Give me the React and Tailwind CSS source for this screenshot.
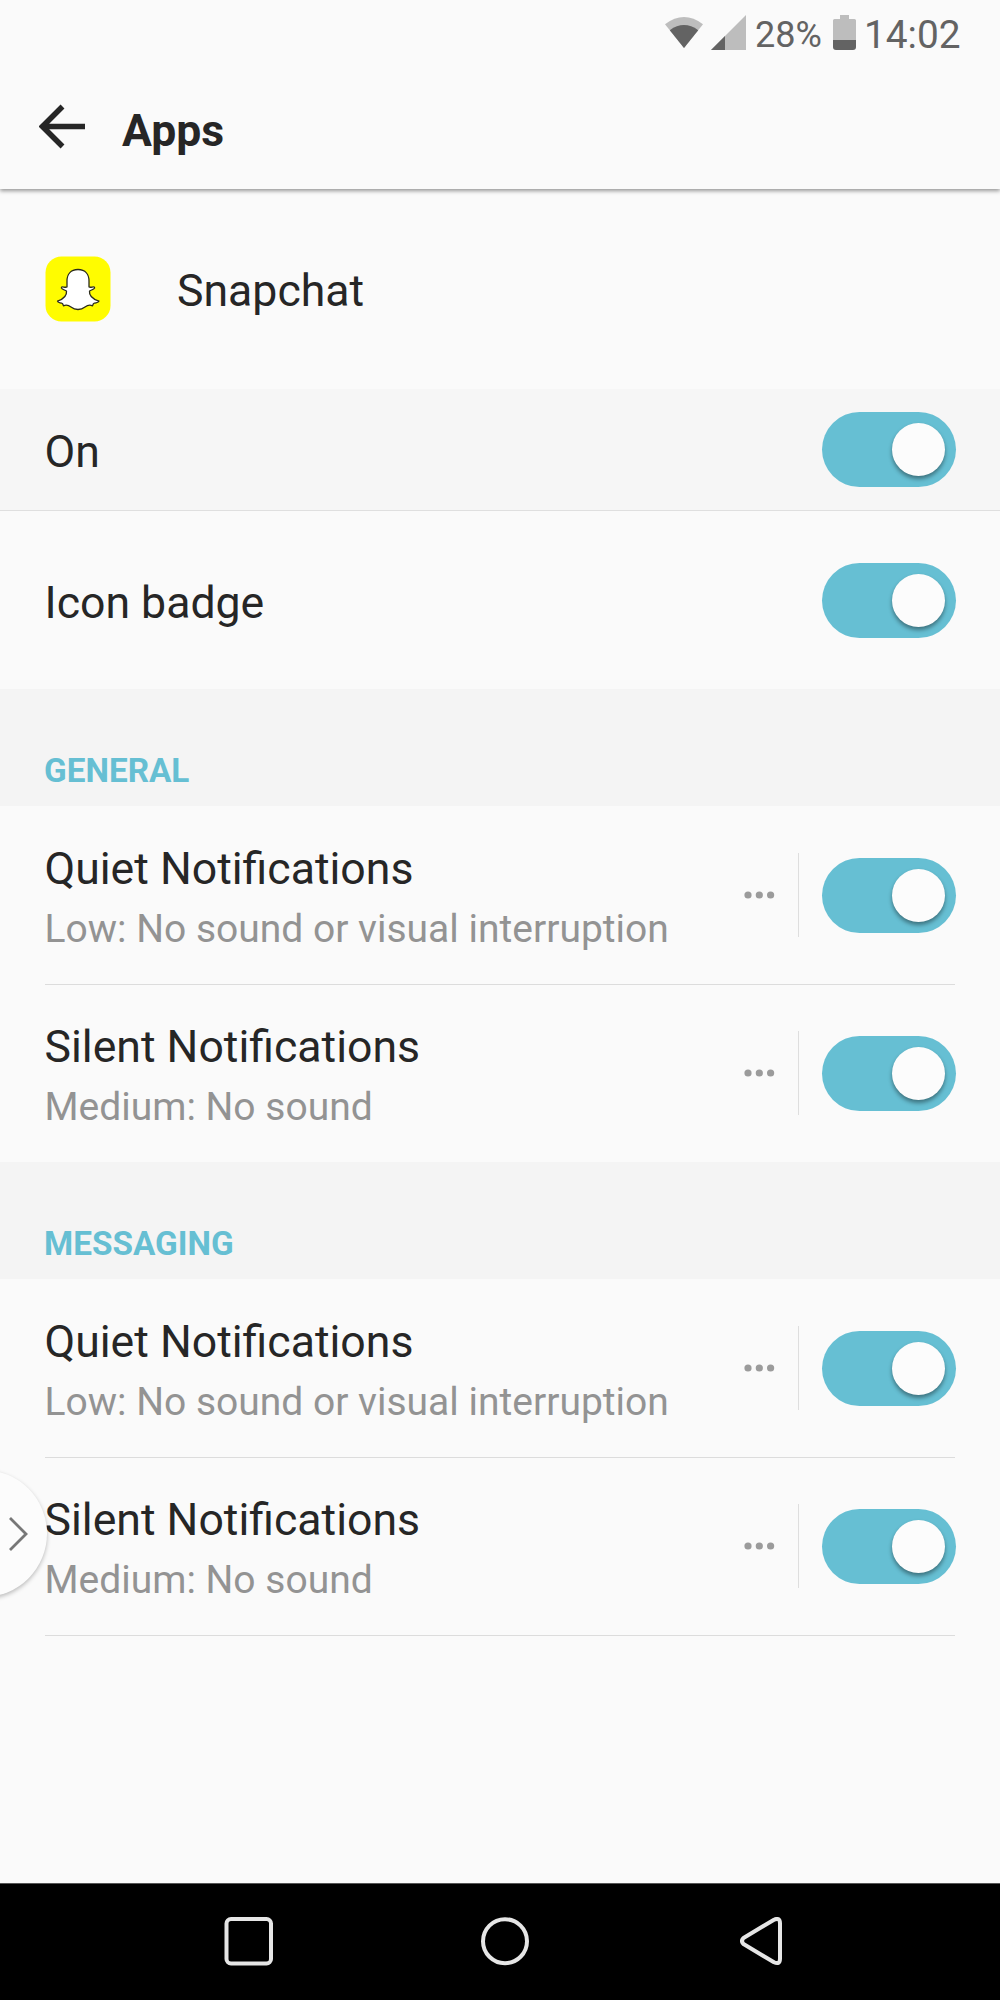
import React from "react";

function StatusBar() {
  return (
    <div className="relative z-10 flex h-[68px] shrink-0 items-start bg-[#fafafa] pl-[664px] text-[#636363]">
      <svg className="mt-[16px] h-[34px] w-[40px] shrink-0" viewBox="0 0 40 34">
        <path d="M1 8.2Q20-6.200 39 8.200L20 32Z" fill="#bdbdbd" />
        <path d="M5.800 14.200Q20 4 34.200 14.200L20 32Z" fill="#636363" />
      </svg>
      <svg className="ml-[7px] mt-[15px] h-[35px] w-[35px] shrink-0" viewBox="0 0 35 35">
        <path d="M35 0V35H0Z" fill="#bdbdbd" />
        <path d="M14 21V35H0Z" fill="#636363" />
      </svg>
      <span className="ml-[9px] mt-[15px] w-[68px] whitespace-nowrap text-[36px] leading-[40px]">28%</span>
      <svg className="ml-[10px] mt-[15px] h-[35px] w-[23px] shrink-0" viewBox="0 0 23 35">
        <path d="M0 5.500Q0 4 1.500 4H7V0H16V4H21.500Q23 4 23 5.500V25H0Z" fill="#bdbdbd" />
        <path d="M0 25H23V32Q23 35 20 35H3Q0 35 0 32Z" fill="#636363" />
      </svg>
      <span className="ml-[8px] mt-[15px] whitespace-nowrap text-[38.8px] leading-[40px]">14:02</span>
    </div>
  );
}

function Header() {
  return (
    <header className="relative flex h-[121px] shrink-0 items-center bg-[#fafafa] pl-[39px] shadow-[0_2px_4px_rgba(0,0,0,0.4)]">
      <svg className="h-[46px] w-[46px] shrink-0 -translate-y-[2px]" viewBox="0 0 46 46" fill="none" stroke="#262626" strokeWidth="5.5">
        <path d="M23.500 2.500L3.500 22.500L23.500 42.500M3.500 22.500H46" />
      </svg>
      <h1 className="ml-[37px] pt-[4px] text-[44.5px] font-bold leading-[60px]">Apps</h1>
    </header>
  );
}

function Toggle() {
  return (
    <button aria-label="Toggle" className="-mr-px flex h-[75px] w-[134px] shrink-0 items-center justify-end rounded-full bg-[#66bfd3] pr-[11px]">
      <span className="size-[53px] rounded-full bg-[#fcfcfc] shadow-[0_3px_4px_rgba(0,0,0,0.4)]" />
    </button>
  );
}

function SnapchatIcon() {
  return (
    <svg className="h-[66px] w-[66px] shrink-0" viewBox="0 0 66 66">
      <rect x="0.500" y="0.500" width="65" height="65" rx="16" fill="#fffc00" />
      <path
        d="M33 13.500C25.500 13.500 22 18.500 22 25V31C20 32 17.500 30 16.500 31.200C15.700 32.500 18 33.500 21.500 35C22 39 18.500 43 12.500 45.200C12.800 47 15 46.500 17.500 47.500L18.500 49.800C21.500 48.500 24 49.500 26 51C28.500 53 30.500 53.500 33 53.500C35.500 53.500 37.500 53 40 51C42 49.500 44.500 48.500 47.500 49.800L48.500 47.500C51 46.500 53.500 47 54 45.200C47.500 43 44 39 44.500 35C48 33.500 50.300 32.500 49.500 31.200C48.500 30 46 32 44 31V25C44 18.500 40.500 13.500 33 13.500Z"
        fill="white" stroke="#2b2b1c" strokeWidth="1.300" strokeLinejoin="round"
      />
    </svg>
  );
}

function SectionHeader({ children }) {
  return (
    <h2 className="h-[117px] shrink-0 bg-[#f4f4f4] pl-[44px] pt-[62px] text-[33.3px] font-bold leading-[40px] text-[#66bfd3]">
      {children}
    </h2>
  );
}

function NotificationRow({ title, detail, divider = true }) {
  return (
    <div className="mx-[45px] h-[178px] shrink-0">
      <div className="flex h-[178px] items-center">
        <div className="-ml-[0.5px] flex-1 whitespace-nowrap pt-[7px]">
          <div className="text-[44.6px] leading-[60px]">{title}</div>
          <div className="text-[39px] leading-[60px] text-[#939393]">{detail}</div>
        </div>
        <svg className="h-[8px] w-[31px] shrink-0" viewBox="0 0 31 8" fill="#9b9b9b">
          <circle cx="4" cy="4" r="3.600" />
          <circle cx="15.300" cy="4" r="3.600" />
          <circle cx="26.600" cy="4" r="3.600" />
        </svg>
        <div className="ml-[23px] mr-[23px] h-[84px] w-px bg-[#dedede]" />
        <Toggle />
      </div>
      {divider && <div className="h-px bg-[#dcdcdc]" />}
    </div>
  );
}

function NavBar() {
  return (
    <nav className="flex h-[117px] shrink-0 items-start border-t border-[#555] bg-black pl-[224px] pt-[33px]">
      <svg className="h-[49px] w-[49px]" viewBox="0 0 49 49" fill="none" stroke="#e6e6e6" strokeWidth="4">
        <rect x="2.500" y="2" width="44.500" height="44.500" rx="4.500" />
      </svg>
      <svg className="ml-[208px] h-[49px] w-[49px]" viewBox="0 0 49 49" fill="none" stroke="#e6e6e6" strokeWidth="4">
        <circle cx="24" cy="24.200" r="22" />
      </svg>
      <svg className="ml-[210px] h-[49px] w-[43px]" viewBox="0 0 43 49" fill="none" stroke="#e6e6e6" strokeWidth="4">
        <path d="M3.500 21L34 2.700Q40 0 40 6.500V41.500Q40 48 34 45.300L3.500 27Q0.500 24 3.500 21Z" strokeLinejoin="round" />
      </svg>
    </nav>
  );
}

export default function App() {
  return (
    <div className="relative flex h-[2000px] w-[1000px] flex-col overflow-hidden bg-[#fafafa] font-[Roboto,sans-serif] text-[#262626]">
      <StatusBar />
      <Header />
      <div className="flex h-[200px] shrink-0 items-center pl-[45px]">
        <SnapchatIcon />
        <span className="ml-[66px] pt-[4px] text-[44.6px] leading-[60px]">Snapchat</span>
      </div>
      <div className="flex h-[122px] shrink-0 items-center justify-between border-b border-[#dfdfdf] bg-[#f6f6f6] px-[45px]">
        <span className="-ml-[0.5px] pt-[4px] text-[44.6px] leading-[60px]">On</span>
        <Toggle />
      </div>
      <div className="flex h-[178px] shrink-0 items-center justify-between px-[45px]">
        <span className="-ml-[0.5px] pt-[5px] text-[44.6px] leading-[60px]">Icon badge</span>
        <Toggle />
      </div>
      <SectionHeader>GENERAL</SectionHeader>
      <NotificationRow title="Quiet Notifications" detail="Low: No sound or visual interruption" />
      <NotificationRow title="Silent Notifications" detail="Medium: No sound" divider={false} />
      <SectionHeader>MESSAGING</SectionHeader>
      <NotificationRow title="Quiet Notifications" detail="Low: No sound or visual interruption" />
      <NotificationRow title="Silent Notifications" detail="Medium: No sound" />
      <div className="flex-1" />
      <NavBar />
      <button aria-label="Open edge panel" className="absolute -left-[80px] top-[1470px] flex h-[127px] w-[127px] items-center rounded-full bg-[#fcfcfc] pl-[88px] shadow-[0_2px_4px_rgba(0,0,0,0.25)]">
        <svg className="h-[36px] w-[22px]" viewBox="0 0 22 36" fill="none" stroke="#777" strokeWidth="2.800">
          <path d="M2 2L18 18L2 34" />
        </svg>
      </button>
    </div>
  );
}
